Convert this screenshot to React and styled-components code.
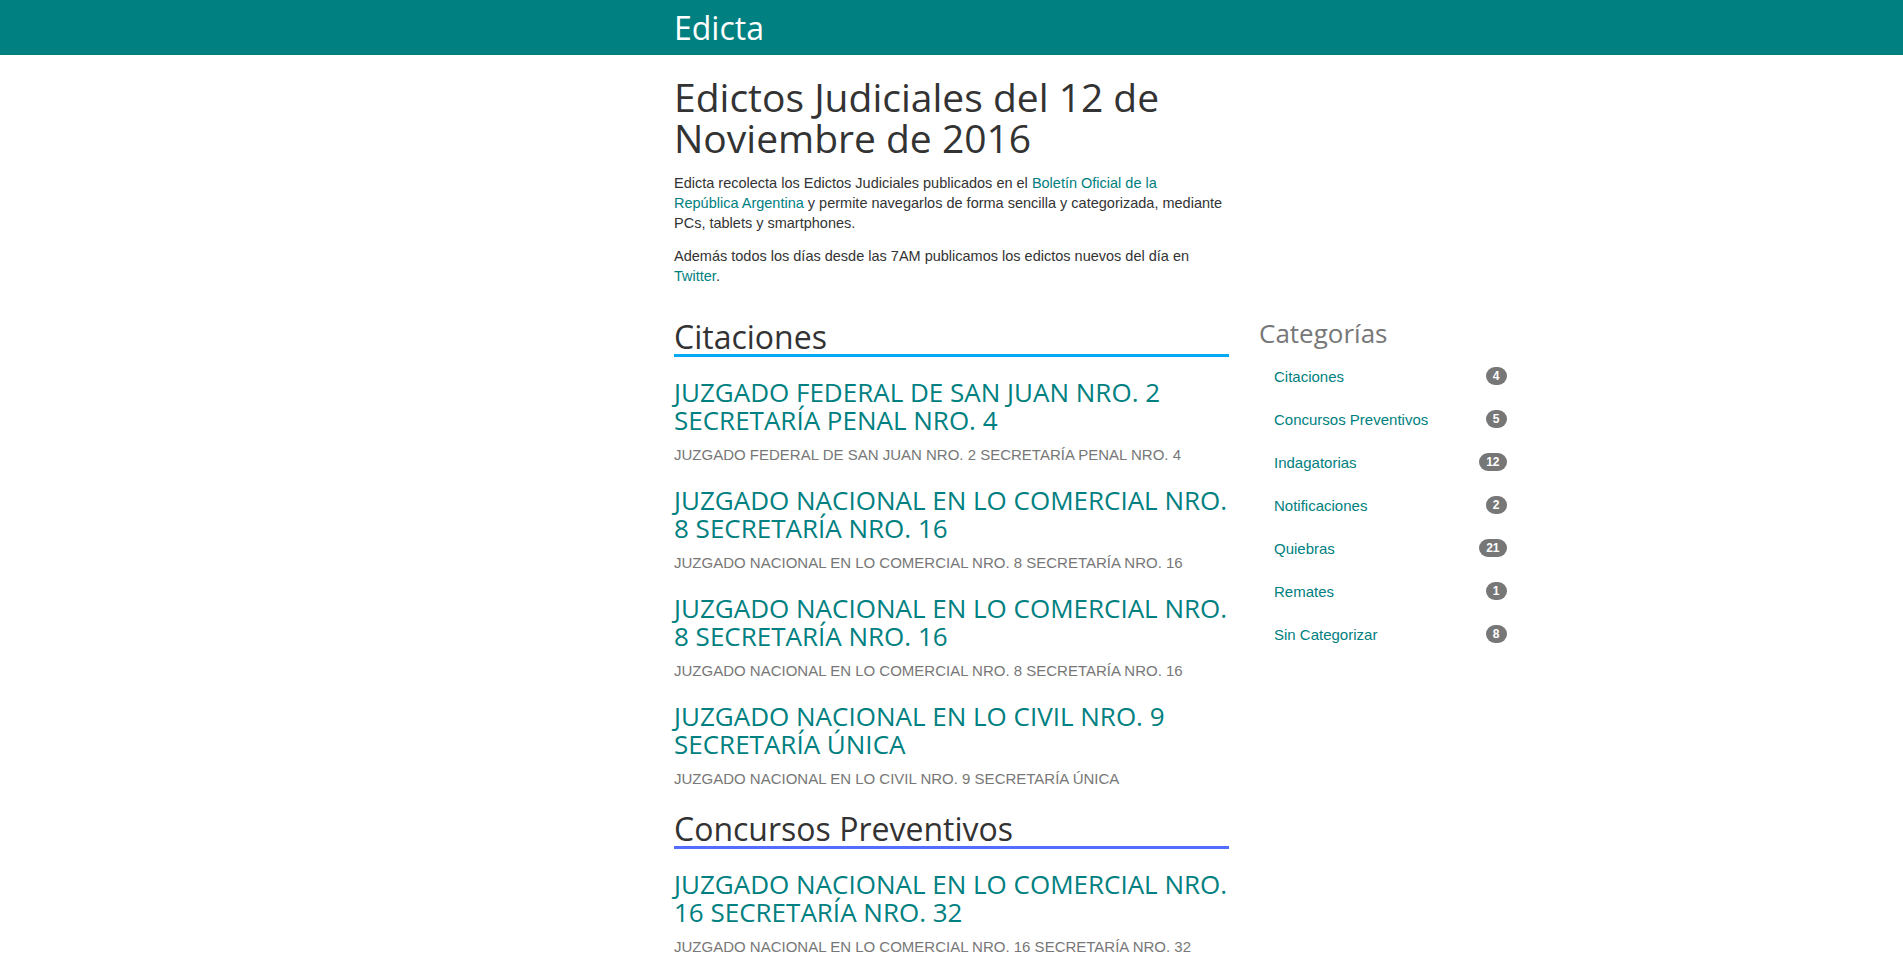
import React from "react";
import styled, { createGlobalStyle } from "styled-components";

const GlobalStyle = createGlobalStyle`
  html, body {
    margin: 0;
    padding: 0;
    background: #fff;
  }
  body {
    font-family: "Liberation Sans", Arial, sans-serif;
    font-size: 15px;
    line-height: 20px;
    color: #333;
  }
  * {
    box-sizing: border-box;
  }
`;

const TEAL = "#008080";

const categories = [
  { name: "Citaciones", count: 4 },
  { name: "Concursos Preventivos", count: 5 },
  { name: "Indagatorias", count: 12 },
  { name: "Notificaciones", count: 2 },
  { name: "Quiebras", count: 21 },
  { name: "Remates", count: 1 },
  { name: "Sin Categorizar", count: 8 },
];

const sections = [
  {
    title: "Citaciones",
    color: "#03a9f4",
    items: [
      "JUZGADO FEDERAL DE SAN JUAN NRO. 2 SECRETARÍA PENAL NRO. 4",
      "JUZGADO NACIONAL EN LO COMERCIAL NRO. 8 SECRETARÍA NRO. 16",
      "JUZGADO NACIONAL EN LO COMERCIAL NRO. 8 SECRETARÍA NRO. 16",
      "JUZGADO NACIONAL EN LO CIVIL NRO. 9 SECRETARÍA ÚNICA",
    ],
  },
  {
    title: "Concursos Preventivos",
    color: "#536dfe",
    items: ["JUZGADO NACIONAL EN LO COMERCIAL NRO. 16 SECRETARÍA NRO. 32"],
  },
];

const App = () => {
  return (
    <>
      <GlobalStyle />
      <TopBar>
        <Shell>
          <MainCol>
            <Brand href="#">Edicta</Brand>
          </MainCol>
        </Shell>
      </TopBar>

      <Shell>
        <MainCol>
          <PageTitle>Edictos Judiciales del 12 de Noviembre de 2016</PageTitle>
          <Intro>
            Edicta recolecta los Edictos Judiciales publicados en el{" "}
            <Link href="#">
              Boletín Oficial de la
              <br />
              República Argentina
            </Link>{" "}
            y permite navegarlos de forma sencilla y categorizada, mediante
            PCs, tablets y smartphones.
          </Intro>
          <Intro>
            Además todos los días desde las 7AM publicamos los edictos nuevos
            del día en <Link href="#">Twitter</Link>.
          </Intro>
        </MainCol>
      </Shell>

      <Shell>
        <Row>
          <MainCol>
            {sections.map(section => (
              <Section key={section.title}>
                <SectionTitle $line={section.color}>{section.title}</SectionTitle>
                {section.items.map((item, i) => (
                  <Entry key={i}>
                    <EntryTitle href="#">{item}</EntryTitle>
                    <EntryText>{item}</EntryText>
                  </Entry>
                ))}
              </Section>
            ))}
          </MainCol>

          <Sidebar>
            <SidebarTitle>Categorías</SidebarTitle>
            <NavList>
              {categories.map(cat => (
                <NavItem key={cat.name}>
                  <NavLink href="#">
                    <span>{cat.name}</span>
                    <Badge>{cat.count}</Badge>
                  </NavLink>
                </NavItem>
              ))}
            </NavList>
          </Sidebar>
        </Row>
      </Shell>
    </>
  );
};

const TopBar = styled.header`
  background: ${TEAL};
  height: 55px;
`;

const Shell = styled.div`
  width: 1170px;
  margin: 0 auto;
  padding: 0 15px;
`;

const Row = styled.div`
  display: flex;
  margin-top: 33px;
`;

const MainCol = styled.div`
  width: 555px;
  margin-left: 292.5px;
  flex-shrink: 0;
`;

const Brand = styled.a`
  display: block;
  font-family: "Open Sans", sans-serif;
  font-size: 32px;
  line-height: 55px;
  color: #fff;
  text-decoration: none;
`;

const PageTitle = styled.h1`
  font-family: "Open Sans", sans-serif;
  font-weight: 400;
  font-size: 39px;
  line-height: 41px;
  color: #333;
  margin: 21px 0 15px;
`;

const Intro = styled.p`
  font-size: 14.5px;
  margin: 0 0 13px;
`;

const Link = styled.a`
  color: ${TEAL};
  text-decoration: none;
`;

const Section = styled.section`
  & + & {
    margin-top: 22px;
  }
`;

const SectionTitle = styled.h2`
  font-family: "Open Sans", sans-serif;
  font-weight: 400;
  font-size: 32px;
  line-height: 35px;
  color: #333;
  margin: 0;
  border-bottom: 3px solid ${p => p.$line};
`;

const Entry = styled.article`
  margin-top: 21px;
`;

const EntryTitle = styled.a`
  display: block;
  font-family: "Open Sans", sans-serif;
  font-size: 26px;
  line-height: 28px;
  color: ${TEAL};
  text-decoration: none;
`;

const EntryText = styled.p`
  margin: 11px 0 0;
  color: #777;
`;

const Sidebar = styled.aside`
  width: 262.5px;
  margin-left: auto;
`;

const SidebarTitle = styled.h3`
  font-family: "Open Sans", sans-serif;
  font-weight: 400;
  font-size: 26px;
  line-height: 28px;
  color: #777;
  margin: 0 0 9.5px;
`;

const NavList = styled.ul`
  list-style: none;
  margin: 0;
  padding: 0;
`;

const NavItem = styled.li`
  & + & {
    margin-top: 3px;
  }
`;

const NavLink = styled.a`
  display: flex;
  justify-content: space-between;
  align-items: flex-start;
  padding: 10px 15px;
  color: ${TEAL};
  text-decoration: none;
`;

const Badge = styled.span`
  display: inline-block;
  min-width: 10px;
  padding: 3px 7px;
  font-size: 12px;
  font-weight: 700;
  line-height: 12px;
  color: #fff;
  text-align: center;
  background: #777;
  border-radius: 10px;
`;

export default App;
